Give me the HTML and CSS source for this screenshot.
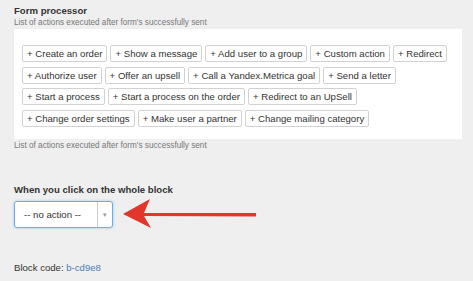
FILE: index.html
```html
<!DOCTYPE html>
<html lang="en">
<head>
  <meta charset="UTF-8" />
  <title>Form processor</title>
  <link rel="stylesheet" href="styles.css">
</head>
<body>
  <div class="page">
    <div class="title">Form processor</div>
    <div class="hint">List of actions executed after form's successfully sent</div>

    <div class="panel">
      <div class="actions">
        <span class="action">+ Create an order</span>
        <span class="action">+ Show a message</span>
        <span class="action">+ Add user to a group</span>
        <span class="action">+ Custom action</span>
        <span class="action">+ Redirect</span>
        <span class="action">+ Authorize user</span>
        <span class="action">+ Offer an upsell</span>
        <span class="action">+ Call a Yandex.Metrica goal</span>
        <span class="action">+ Send a letter</span>
        <span class="action">+ Start a process</span>
        <span class="action">+ Start a process on the order</span>
        <span class="action">+ Redirect to an UpSell</span>
        <span class="action">+ Change order settings</span>
        <span class="action">+ Make user a partner</span>
        <span class="action">+ Change mailing category</span>
      </div>
    </div>
    <div class="hint note">List of actions executed after form's successfully sent</div>

    <div class="label">When you click on the whole block</div>
    <div class="select-row">
      <div class="select">
        <span class="select-value">-- no action --</span>
        <span class="select-caret">&#9662;</span>
      </div>
      <svg class="arrow" width="140" height="34" viewBox="0 0 140 34">
        <polygon points="1,16 28,1 22,15 134,15 134,18.5 22,18 29,30" fill="#e2352c"/>
      </svg>
    </div>

    <div class="code">Block code: <a href="#">b-cd9e8</a></div>
  </div>
</body>
</html>
```

FILE: styles.css
```css
body {
  margin: 0;
  background: #efefef;
  font-family: 'Liberation Sans', Arial, sans-serif;
  color: #333;
}
.page {
  padding: 5px 11px 0 14px;
}
.title {
  font-size: 9.6px;
  font-weight: bold;
  line-height: 12px;
}
.hint {
  font-size: 8.2px;
  color: #777;
  line-height: 10px;
  margin-top: 1px;
}
.panel {
  background: #fff;
  margin-top: 1px;
  padding: 16px 8px 12px;
}
.actions {
  display: flex;
  flex-wrap: wrap;
  gap: 4.5px 3px;
}
.action {
  font-size: 9.6px;
  line-height: 15px;
  padding: 0 4px;
  border: 1px solid #d2d2d2;
  border-radius: 2px;
  background: #fff;
  white-space: nowrap;
}
.note {
  margin-top: 2px;
}
.label {
  margin-top: 33px;
  font-size: 9.6px;
  font-weight: bold;
  line-height: 12px;
}
.select-row {
  position: relative;
  margin-top: 5px;
  height: 27px;
}
.select {
  display: flex;
  width: 97px;
  height: 25px;
  background: #fff;
  border: 1px solid #66afe9;
  border-radius: 3px;
  box-shadow: 0 0 3px rgba(102, 175, 233, 0.6);
}
.select-value {
  flex: 1;
  font-size: 9.6px;
  line-height: 25px;
  padding-left: 9px;
}
.select-caret {
  width: 14px;
  border-left: 1px solid #ccc;
  color: #999;
  font-size: 7px;
  line-height: 25px;
  text-align: center;
}
.arrow {
  position: absolute;
  left: 108px;
  top: -3px;
}
.code {
  margin-top: 34px;
  font-size: 9.6px;
  line-height: 12px;
}
.code a {
  color: #4a7ebb;
  text-decoration: none;
}
```
